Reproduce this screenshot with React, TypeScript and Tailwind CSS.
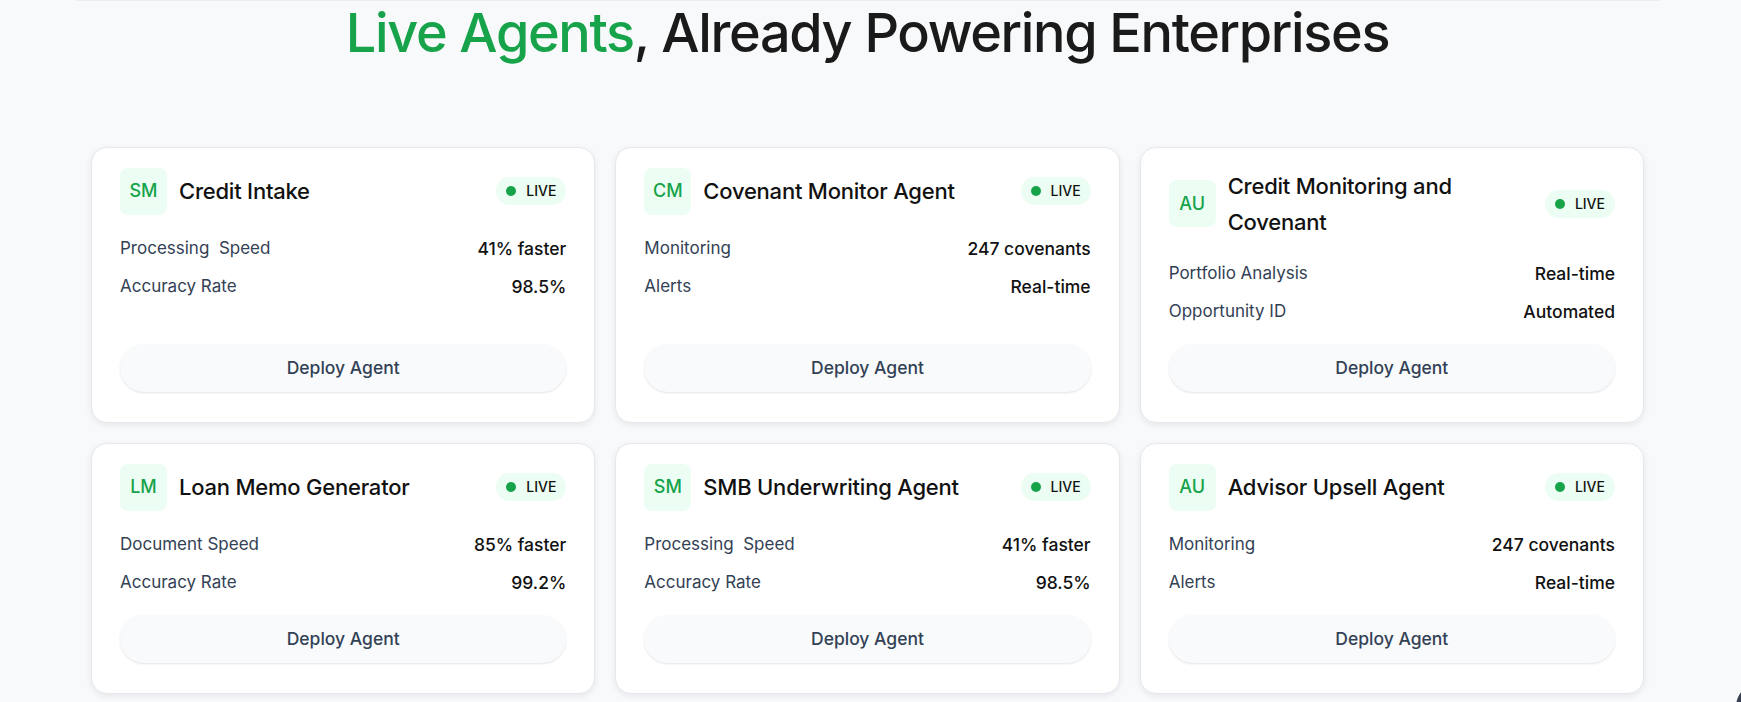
import React from "react";

type Agent = {
  code: string;
  title: string;
  stats: [string, string][];
};

const agents: Agent[] = [
  { code: "SM", title: "Credit Intake", stats: [["Processing\u00a0 Speed", "41% faster"], ["Accuracy Rate", "98.5%"]] },
  { code: "CM", title: "Covenant Monitor Agent", stats: [["Monitoring", "247 covenants"], ["Alerts", "Real-time"]] },
  { code: "AU", title: "Credit Monitoring and Covenant", stats: [["Portfolio Analysis", "Real-time"], ["Opportunity ID", "Automated"]] },
  { code: "LM", title: "Loan Memo Generator", stats: [["Document Speed", "85% faster"], ["Accuracy Rate", "99.2%"]] },
  { code: "SM", title: "SMB Underwriting Agent", stats: [["Processing\u00a0 Speed", "41% faster"], ["Accuracy Rate", "98.5%"]] },
  { code: "AU", title: "Advisor Upsell Agent", stats: [["Monitoring", "247 covenants"], ["Alerts", "Real-time"]] },
];

function Card({ a }: { a: Agent }) {
  return (
    <div className="flex flex-col rounded-2xl border border-[#e6e8ec] bg-white px-7 pt-5 pb-[30px] shadow-[0_2px_6px_rgba(15,23,42,0.08)]">
      <div className="flex items-center justify-between gap-4">
        <div className="flex min-w-0 items-center gap-3">
          <div className="flex h-[47px] w-[47px] shrink-0 items-center justify-center rounded-lg bg-[#ecfdf3] text-lg font-medium text-[#16a34a]">
            {a.code}
          </div>
          <div className="text-[22px] font-medium leading-9 tracking-[-0.01em] text-[#111111]">{a.title}</div>
        </div>
        <div className="flex shrink-0 items-center gap-2.5 rounded-full bg-[#ecfdf3] px-2.5 py-1 text-sm font-medium leading-5 text-[#111111]">
          <span className="h-2.5 w-2.5 rounded-full bg-[#16a34a]" />
          LIVE
        </div>
      </div>
      <div className="mt-5 flex flex-col gap-[11px]">
        {a.stats.map(([k, v]) => (
          <div key={k} className="flex items-center justify-between leading-[27px]">
            <span className="text-[17px] text-[#334155]">{k}</span>
            <span className="text-[17.5px] font-medium text-[#111111]">{v}</span>
          </div>
        ))}
      </div>
      <div className="min-h-[19px] flex-1" />
      <button className="h-12 w-full rounded-full bg-[#f8fafc] text-[17.5px] font-medium text-[#334155] shadow-[0_1px_2px_rgba(15,23,42,0.12)]">
        Deploy Agent
      </button>
    </div>
  );
}

export default function App() {
  return (
    <div className="relative h-[702px] overflow-hidden bg-[#f8f9fb] pr-[6px] font-['Inter',sans-serif]">
      <div className="mx-auto h-px w-[1585px] bg-[#eceef1]" />
      <h1 className="text-center text-[54px] font-medium leading-[1.2] tracking-tight text-[#1a1a1a]">
        <span className="text-[#16a34a]">Live Agents</span>, Already Powering Enterprises
      </h1>
      <div className="mx-auto mt-[81px] grid w-[1553px] grid-cols-3 gap-x-5 gap-y-5">
        {agents.map((a, i) => (
          <Card key={i} a={a} />
        ))}
      </div>
      <div className="absolute left-[1736px] top-[683px] h-12 w-12 rounded-full bg-[#374151]" />
    </div>
  );
}
